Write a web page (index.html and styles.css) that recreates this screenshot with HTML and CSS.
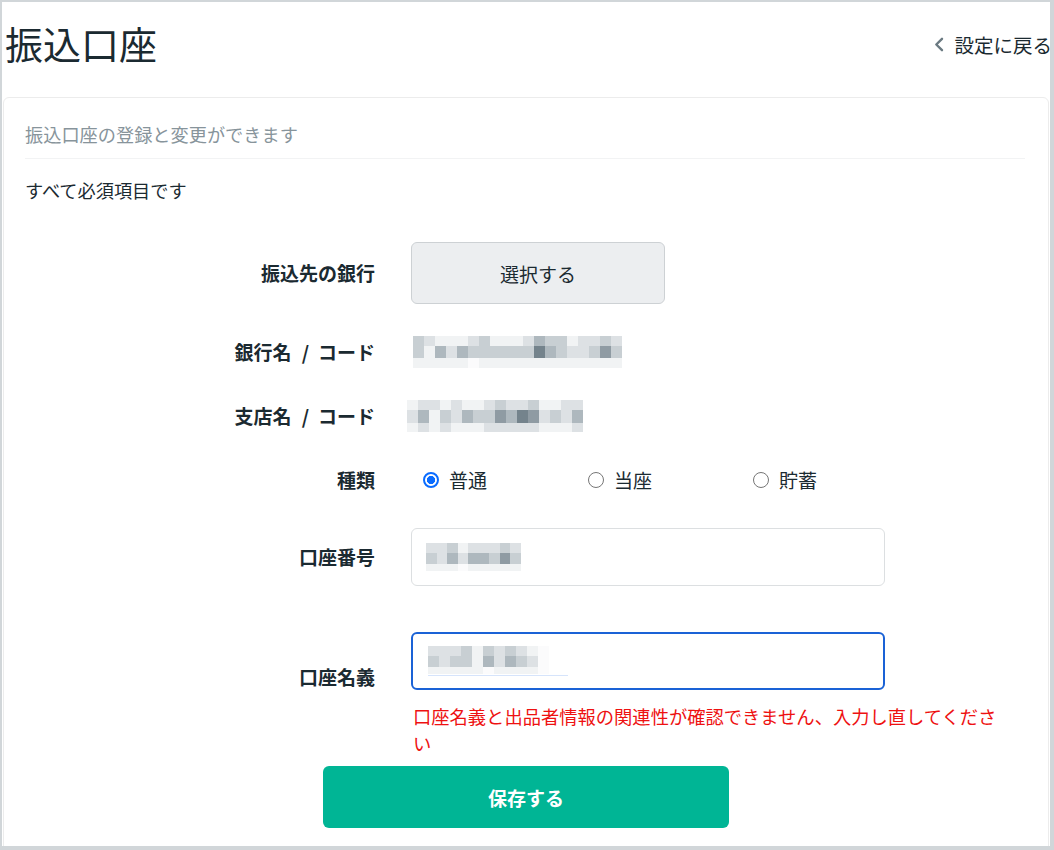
FILE: index.html
```html
<!DOCTYPE html>
<html lang="ja">
<head>
<meta charset="utf-8">
<title>振込口座</title>
<link rel="stylesheet" href="styles.css">
</head>
<body>
<div class="frame">
  <header class="header">
    <h1 class="title">振込口座</h1>
    <a class="back" href="#">
      <svg class="chev" width="10" height="15" viewBox="0 0 10 15"><path d="M8 1.8 L2.3 7.5 L8 13.2" fill="none" stroke="#6b7a82" stroke-width="2.4" stroke-linecap="round" stroke-linejoin="round"/></svg>
      <span>設定に戻る</span>
    </a>
  </header>
  <section class="card">
    <p class="subtitle">振込口座の登録と変更ができます</p>
    <p class="note">すべて必須項目です</p>
    <div class="form">
      <div class="label">振込先の銀行</div>
      <div class="ctl"><button class="select-btn">選択する</button></div>

      <div class="label">銀行名<span class="slash">/</span>コード</div>
      <div class="ctl ctl-bank">
        <div class="mosaic m19">
          <span class="c"></span><span class="b"></span><span class="a"></span><span class="a"></span><span class="a"></span><span class="b"></span><span class="c"></span><span class="a"></span><span class="a"></span><span class="a"></span><span class="b"></span><span class="d"></span><span class="c"></span><span class="c"></span><span class="a"></span><span class="b"></span><span class="b"></span><span class="c"></span><span class="b"></span>
          <span class="c"></span><span class="a"></span><span class="d"></span><span class="b"></span><span class="d"></span><span class="c"></span><span class="c"></span><span class="c"></span><span class="c"></span><span class="c"></span><span class="c"></span><span class="f"></span><span class="d"></span><span class="c"></span><span class="b"></span><span class="b"></span><span class="c"></span><span class="e"></span><span class="c"></span>
          <span class="a"></span><span class="a"></span><span class="a"></span><span class="a"></span><span class="a"></span><span class="w"></span><span class="a"></span><span class="a"></span><span class="a"></span><span class="a"></span><span class="a"></span><span class="a"></span><span class="a"></span><span class="a"></span><span class="a"></span><span class="a"></span><span class="a"></span><span class="a"></span><span class="a"></span>
        </div>
      </div>

      <div class="label">支店名<span class="slash">/</span>コード</div>
      <div class="ctl ctl-branch">
        <div class="mosaic m16">
          <span class="a"></span><span class="b"></span><span class="b"></span><span class="a"></span><span class="b"></span><span class="a"></span><span class="a"></span><span class="b"></span><span class="c"></span><span class="b"></span><span class="b"></span><span class="c"></span><span class="a"></span><span class="a"></span><span class="b"></span><span class="b"></span>
          <span class="b"></span><span class="d"></span><span class="a"></span><span class="c"></span><span class="b"></span><span class="d"></span><span class="c"></span><span class="c"></span><span class="e"></span><span class="d"></span><span class="f"></span><span class="e"></span><span class="b"></span><span class="c"></span><span class="b"></span><span class="d"></span>
          <span class="a"></span><span class="b"></span><span class="a"></span><span class="b"></span><span class="a"></span><span class="a"></span><span class="a"></span><span class="b"></span><span class="b"></span><span class="b"></span><span class="b"></span><span class="b"></span><span class="a"></span><span class="a"></span><span class="a"></span><span class="b"></span>
        </div>
      </div>

      <div class="label">種類</div>
      <div class="ctl radios">
        <label class="radio"><span class="dot checked"></span><span>普通</span></label>
        <label class="radio"><span class="dot"></span><span>当座</span></label>
        <label class="radio"><span class="dot"></span><span>貯蓄</span></label>
      </div>

      <div class="label">口座番号</div>
      <div class="ctl">
        <div class="input">
          <div class="mosaic m9">
            <span class="b"></span><span class="b"></span><span class="c"></span><span class="a"></span><span class="b"></span><span class="b"></span><span class="b"></span><span class="c"></span><span class="b"></span>
            <span class="c"></span><span class="b"></span><span class="d"></span><span class="b"></span><span class="d"></span><span class="d"></span><span class="c"></span><span class="e"></span><span class="c"></span>
            <span class="a"></span><span class="a"></span><span class="a"></span><span class="w"></span><span class="a"></span><span class="a"></span><span class="a"></span><span class="a"></span><span class="a"></span>
          </div>
        </div>
      </div>

      <div class="label label-name">口座名義</div>
      <div class="ctl ctl-name">
        <div class="input input-focus">
          <div class="compose">
            <div class="mosaic m11">
              <span class="b"></span><span class="b"></span><span class="b"></span><span class="c"></span><span class="a"></span><span class="c"></span><span class="b"></span><span class="c"></span><span class="b"></span><span class="a"></span><span class="w"></span>
              <span class="c"></span><span class="b"></span><span class="c"></span><span class="c"></span><span class="a"></span><span class="d"></span><span class="b"></span><span class="d"></span><span class="c"></span><span class="b"></span><span class="w"></span>
              <span class="a"></span><span class="a"></span><span class="a"></span><span class="a"></span><span class="a"></span><span class="w"></span><span class="a"></span><span class="a"></span><span class="a"></span><span class="a"></span><span class="w"></span>
            </div>
          </div>
        </div>
        <p class="error">口座名義と出品者情報の関連性が確認できません、入力し直してください</p>
      </div>
    </div>
    <div class="actions"><button class="save">保存する</button></div>
  </section>
</div>
</body>
</html>
```

FILE: styles.css
```css
* { box-sizing: border-box; }
html, body { margin: 0; padding: 0; }
body {
  font-family: "Noto Sans CJK JP", "Noto Sans", sans-serif;
  color: #1b2a31;
  background: #fff;
}
.frame {
  width: 1054px;
  height: 850px;
  border-style: solid;
  border-color: #d1d6d9;
  border-width: 2px 4px 4px 2px;
  overflow: hidden;
  background: #fff;
}
.header {
  height: 95px;
  display: flex;
  align-items: center;
  justify-content: space-between;
  padding: 0 0 10px 3px;
}
.title {
  margin: 0;
  font-size: 38px;
  font-weight: 400;
  line-height: 46px;
  margin-top: -4px;
}
.back {
  display: flex;
  align-items: center;
  gap: 10px;
  color: #1b2a31;
  text-decoration: none;
  font-size: 19.5px;
  line-height: 26px;
  margin-right: -2px;
}
.chev { display: block; }
.card {
  margin: 0 1px;
  height: 780px;
  border: 1px solid #ececec;
  border-radius: 6px;
  padding: 0 23px 0 21px;
}
.subtitle {
  margin: 0;
  padding: 22px 0 10px;
  font-size: 18.2px;
  line-height: 28px;
  color: #87949b;
  border-bottom: 1px solid #f2f3f4;
}
.note {
  margin: 17px 0 0;
  font-size: 18.2px;
  line-height: 28px;
}
.form {
  margin-top: 38px;
  display: grid;
  grid-template-columns: 350px 596px;
  column-gap: 36px;
  row-gap: 32px;
  align-items: center;
}
.label {
  text-align: right;
  font-weight: 700;
  font-size: 19px;
  line-height: 32px;
}
.slash { padding: 0 9px 0 10px; font-weight: 700; }
.ctl { min-height: 32px; display: flex; align-items: center; }
.select-btn {
  width: 254px;
  height: 62px;
  background: #eceef0;
  border: 1px solid #cdd1d4;
  border-radius: 6px;
  font-family: inherit;
  font-size: 19px;
  color: #1b2a31;
}
.ctl-bank { padding-left: 2px; }
.ctl-branch { margin-left: -4px; }
.mosaic { display: grid; grid-auto-rows: 11px; }
.mosaic span { display: block; }
.m19 { grid-template-columns: repeat(19, 11px); grid-template-rows: 10px 12px 10px; }
.m16 { grid-template-columns: repeat(16, 11px); grid-template-rows: 10px 13px 9px; }
.m9 { grid-template-columns: repeat(9, 10.5px); grid-template-rows: 10px 11px 7px; }
.m11 { grid-template-columns: repeat(11, 11px); grid-template-rows: 10px 11px 7px; }
.mosaic .w { background: #fbfbfc; }
.mosaic .a { background: #f1f3f4; }
.mosaic .b { background: #dde1e4; }
.mosaic .c { background: #c8cfd3; }
.mosaic .d { background: #aeb8be; }
.mosaic .e { background: #8f9ba3; }
.mosaic .f { background: #74838c; }
.radios { padding-left: 12px; }
.radio {
  width: 165px;
  display: flex;
  align-items: center;
  gap: 10px;
  font-size: 19px;
  line-height: 32px;
}
.dot {
  width: 16px;
  height: 16px;
  border-radius: 50%;
  border: 1.5px solid #767676;
  background: #fff;
  flex: none;
}
.dot.checked {
  border: 2px solid #0a6cff;
  background: radial-gradient(circle, #0a6cff 0 3.8px, #fff 4.4px);
}
.input {
  width: 474px;
  height: 58px;
  border: 1px solid #dcdfe1;
  border-radius: 6px;
  display: flex;
  align-items: center;
  padding-left: 14px;
}
.ctl-name {
  flex-direction: column;
  align-items: flex-start;
  margin-top: 14px;
}
.label-name { align-self: start; margin-top: 43px; }
.input-focus {
  border: 2px solid #1a62d6;
  padding-left: 15px;
}
.compose {
  padding-bottom: 1px;
  border-bottom: 1.5px solid #d6e4fb;
  width: 140px;
}
.error {
  margin: 13px 0 0 2px;
  font-size: 18.3px;
  line-height: 27px;
  color: #ee1111;
  width: 594px;
}
.actions { display: flex; justify-content: center; margin-top: 9px; padding-left: 2px; }
.save {
  width: 406px;
  height: 62px;
  background: #00b595;
  border: none;
  border-radius: 6px;
  color: #fff;
  font-family: inherit;
  font-weight: 700;
  font-size: 19px;
}
```
